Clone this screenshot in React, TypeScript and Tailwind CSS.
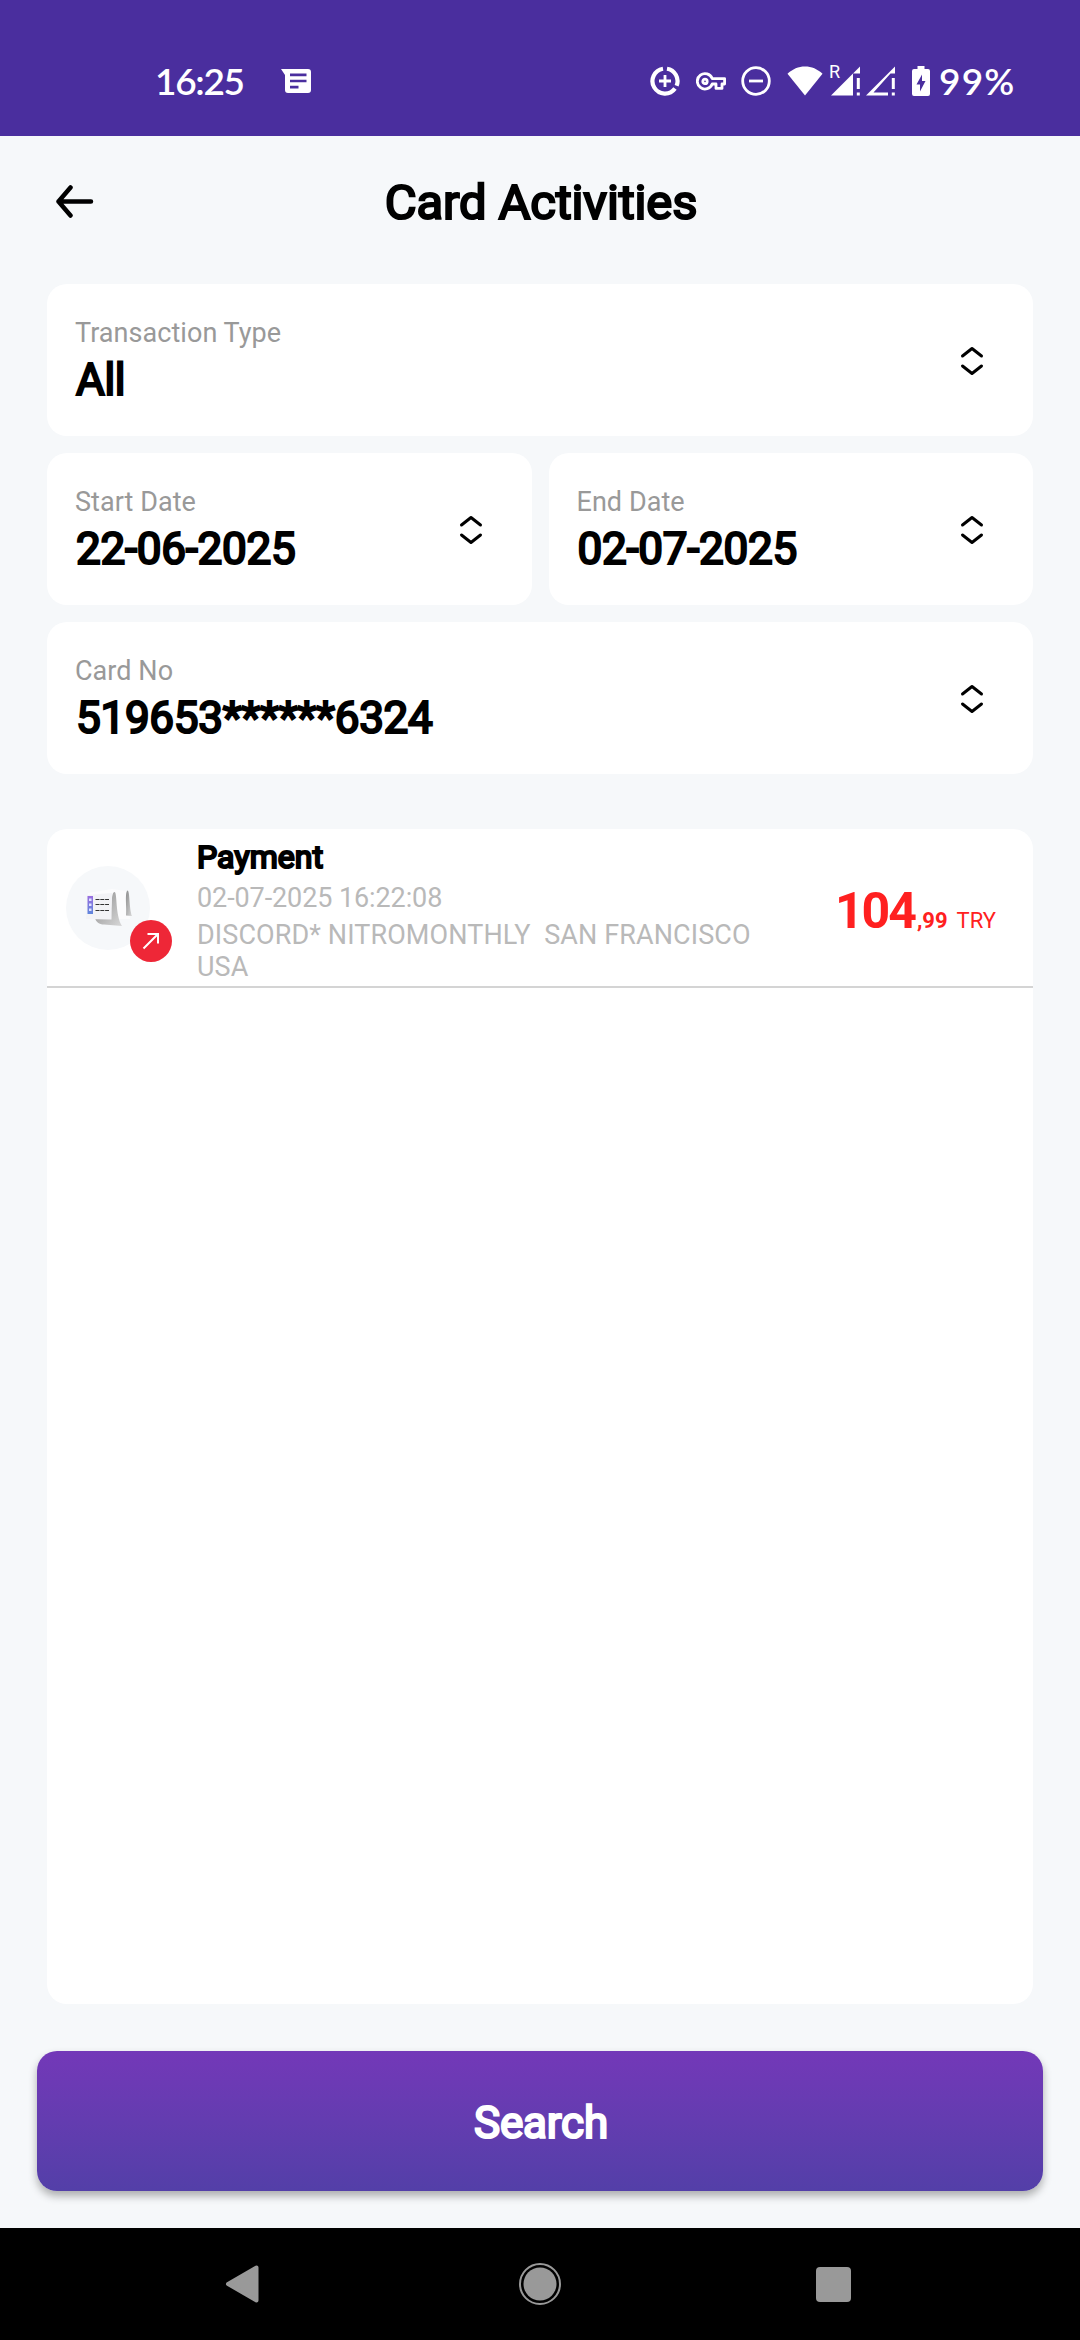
import type { ReactNode } from "react";
import { clsx } from "clsx";

interface Transaction {
  title: string;
  date: string;
  description: string;
  whole: string;
  fraction: string;
  currency: string;
}

const transactions: Transaction[] = [
  {
    title: "Payment",
    date: "02-07-2025 16:22:08",
    description: "DISCORD* NITROMONTHLY\u00a0 SAN FRANCISCO USA",
    whole: "104",
    fraction: ",99",
    currency: "TRY",
  },
];

function MessageIcon() {
  return (
    <svg width="30" height="24" viewBox="0 0 30 24" fill="#fff">
      <path
        fillRule="evenodd"
        d="M0 0h27a3 3 0 0 1 3 3v18a3 3 0 0 1-3 3H7a3 3 0 0 1-3-3V6zM9 4.6v2.6h16.5V4.6zM9 10.7v2.6h16.5v-2.6zM9 16.8v2.6h8.5v-2.6z"
      />
    </svg>
  );
}

function DataSaverIcon() {
  return (
    <svg width="30" height="30" viewBox="0 0 30 30" fill="none" stroke="#fff">
      <path d="M17 2.7A12.5 12.5 0 0 1 26.6 19.8M25 22.5A12.5 12.5 0 1 1 13 2.7" strokeWidth="4.2" />
      <path d="M15 9v12M9 15h12" strokeWidth="2.8" />
    </svg>
  );
}

function KeyIcon() {
  return (
    <svg width="30" height="19" viewBox="0 0 30 19" fill="none" stroke="#fff" strokeWidth="2.8">
      <path strokeLinejoin="round" d="M16.2 6.6H28.6V12H26V16.4H20V12H16.2A7.7 7.7 0 1 1 16.2 6.6Z" />
      <circle cx="9" cy="9.4" r="2.2" />
    </svg>
  );
}

function DoNotDisturbIcon() {
  return (
    <svg width="30" height="30" viewBox="0 0 30 30" fill="none" stroke="#fff" strokeWidth="2.8">
      <circle cx="15" cy="15" r="13.3" />
      <path d="M8 15h14" />
    </svg>
  );
}

function WifiIcon() {
  return (
    <svg width="36" height="30" viewBox="0 0 36 30" fill="#fff">
      <path d="M18 29.5.5 7.8C5.5 3 11.5.5 18 .5S30.5 3 35.5 7.8z" />
    </svg>
  );
}

function SignalIcon({ filled }: { filled?: boolean }) {
  return (
    <svg width="30" height="30" viewBox="0 0 30 30" fill="#fff">
      {filled ? (
        <path d="M0 29.5 29 .5V7.5H22V29.5z" />
      ) : (
        <path fillRule="evenodd" d="M0 29.5 29 .5V7.5H24.5L7.5 26.5H22V29.5z" />
      )}
      <path d="M25.8 12h3v11h-3zM25.8 26.5h3v3h-3z" />
    </svg>
  );
}

function BatteryIcon() {
  return (
    <svg width="18" height="30" viewBox="0 0 18 30" fill="#fff">
      <path
        fillRule="evenodd"
        d="M5.5 0h7v3H16a2 2 0 0 1 2 2V28a2 2 0 0 1-2 2H2a2 2 0 0 1-2-2V5a2 2 0 0 1 2-2h3.5zM10 8.5 4.5 18.5H8V25.5L13.5 15H10z"
      />
    </svg>
  );
}

function StatusBar() {
  return (
    <header className="flex h-[136px] items-center bg-[#4a2e9e] pt-[26px] pr-[65px] pl-[155px] font-['Lato',sans-serif] text-[37px] leading-none font-semibold text-white">
      <span className="w-[126px] pb-[2px] tracking-[-1.3px]">16:25</span>
      <MessageIcon />
      <div className="ml-auto flex items-center">
        <DataSaverIcon />
        <span className="ml-4">
          <KeyIcon />
        </span>
        <span className="ml-[15px]">
          <DoNotDisturbIcon />
        </span>
        <span className="ml-4">
          <WifiIcon />
        </span>
        <span className="relative ml-2">
          <span className="absolute -top-[3px] -left-[2px] font-['Roboto',sans-serif] text-[18px] leading-none font-normal">
            R
          </span>
          <SignalIcon filled />
        </span>
        <span className="ml-[5px]">
          <SignalIcon />
        </span>
        <span className="ml-4">
          <BatteryIcon />
        </span>
        <span className="ml-[9px] w-[76px] pb-[2px] tracking-[1.2px] whitespace-nowrap">99%</span>
      </div>
    </header>
  );
}

function UpDownIcon() {
  return (
    <svg
      className="mt-[2px]"
      width="24"
      height="30"
      viewBox="0 0 24 30"
      fill="none"
      stroke="#000"
      strokeWidth="3"
      strokeLinecap="round"
      strokeLinejoin="round"
    >
      <path d="M2.5 10 12 2.5 21.5 10M2.5 20 12 27.5 21.5 20" />
    </svg>
  );
}

function BoldText({ className, children }: { className?: string; children: ReactNode }) {
  return <div className={clsx("[-webkit-text-stroke:2.2px_currentColor]", className)}>{children}</div>;
}

function SelectField({ label, value }: { label: string; value: string }) {
  return (
    <button className="flex h-[152px] flex-1 items-center justify-between rounded-[20px] bg-white pr-[49px] pl-[28px] text-left">
      <div>
        <div className="pt-px text-[27px] leading-8 tracking-[0.05px] text-[#999]">{label}</div>
        <BoldText className="mt-[6px] ml-px text-[44px] leading-[50px] tracking-[-0.28px]">{value}</BoldText>
      </div>
      <UpDownIcon />
    </button>
  );
}

function ReceiptIcon() {
  return (
    <div className="relative h-[84px] w-[84px] shrink-0 rounded-full bg-[#f6f8fa]">
      <svg className="absolute top-[22px] left-[18px]" width="52" height="42" viewBox="0 0 52 42">
        <defs>
          <linearGradient id="curl" x1="0" y1="0" x2="1" y2="1">
            <stop offset="0" stopColor="#8d8d8d" />
            <stop offset="1" stopColor="#d8d8d8" />
          </linearGradient>
          <linearGradient id="strip" x1="0" y1="0" x2="0" y2="1">
            <stop offset="0" stopColor="#9a6fe0" />
            <stop offset="1" stopColor="#5f86dc" />
          </linearGradient>
        </defs>
        <path d="M4 5 28 1 42 3 46 31H2z" fill="#fcfcfd" />
        <path d="M11 30 26 29C28 20 27 4 30.500 4C33.500 4 31 27 38 38L20 36.500C15 36.500 12 34 11 30z" fill="url(#curl)" />
        <path d="M3 7 28 5 27.500 31.500 2 31z" fill="#f3f3f6" />
        <path d="M43.500 2.500C46 2.500 45 20 48 28L42 27.500C43 20 40.500 5 43.500 2.500z" fill="url(#curl)" />
        <path d="M3.500 8h5.500v18H3.500z" fill="url(#strip)" />
        <path d="M5 10.500h2.500v2.500H5zM5 15.500h2.500v2.500H5zM5 20.500h2.500v2.500H5z" fill="#dfe2ff" />
        <path
          d="M11.500 11.500H25M11.500 16.500H25M11.500 22.500H25"
          stroke="#333"
          strokeWidth="1.2"
          strokeDasharray="4 .8"
        />
      </svg>
      <span className="absolute top-[54px] left-[64px] flex h-[42px] w-[42px] items-center justify-center rounded-full bg-[#ee2737]">
        <svg width="18" height="18" viewBox="0 0 18 18" fill="none" stroke="#fff" strokeWidth="2">
          <path d="M1.500 16.500 16 2M5.500 2H16V11.500" />
        </svg>
      </span>
    </div>
  );
}

function TransactionRow({ tx }: { tx: Transaction }) {
  return (
    <div className="flex h-[159px] items-center border-b-2 border-[#d4d4d4] pr-[37px] pl-[19px]">
      <ReceiptIcon />
      <div className="ml-[47px] w-[570px] pt-[7px] text-[27px] leading-8 text-[#b9b9b9]">
        <BoldText className="text-[32px] leading-9 tracking-[0.1px] text-black [-webkit-text-stroke-width:1.5px]">
          {tx.title}
        </BoldText>
        <div className="mt-[7px] tracking-[-0.1px]">{tx.date}</div>
        <div className="mt-[5px] tracking-[0.1px]">{tx.description}</div>
      </div>
      <div className="ml-auto flex items-baseline pt-[7px] text-[22px] text-[#ff2020]">
        <span className="text-[50px] leading-none font-bold tracking-[-2px]">{tx.whole}</span>
        <span className="ml-[2px] font-bold">{tx.fraction}</span>
        <span className="ml-[9px]">{tx.currency}</span>
      </div>
    </div>
  );
}

function NavBar() {
  return (
    <nav className="flex h-28 items-center justify-between bg-black pr-[229px] pl-[225px]">
      <svg width="34" height="38" viewBox="0 0 34 38" fill="#999" stroke="#999" strokeWidth="4" strokeLinejoin="round">
        <path d="M3 19 31.500 2.500V35.500z" />
      </svg>
      <svg className="ml-1" width="42" height="42" viewBox="0 0 42 42" fill="#999">
        <circle cx="21" cy="21" r="20" fill="none" stroke="#999" strokeWidth="2" />
        <circle cx="21" cy="21" r="16.500" />
      </svg>
      <span className="h-[35px] w-[35px] rounded-[4px] bg-[#999]" />
    </nav>
  );
}

export default function App() {
  return (
    <div className="flex h-[2340px] w-[1080px] flex-col bg-[#f6f8fa] font-['Roboto',sans-serif] text-black">
      <StatusBar />

      <div className="grid h-[132px] grid-cols-[1fr_auto_1fr] items-center pr-[53px] pl-[55px]">
        <button aria-label="Back">
          <svg
            width="40"
            height="34"
            viewBox="0 0 40 34"
            fill="none"
            stroke="#000"
            strokeWidth="4.5"
            strokeLinecap="round"
            strokeLinejoin="round"
          >
            <path d="M36 16.5H3.5M15.5 2.5 3.5 16.5 15.5 30.5" />
          </svg>
        </button>
        <h1>
          <BoldText className="text-[49px] leading-none tracking-[-0.15px]">Card Activities</BoldText>
        </h1>
      </div>

      <main className="mt-4 flex flex-1 flex-col px-[47px]">
        <div className="flex flex-col gap-[17px]">
          <div className="flex">
            <SelectField label="Transaction Type" value="All" />
          </div>
          <div className="flex gap-[17px]">
            <SelectField label="Start Date" value="22-06-2025" />
            <SelectField label="End Date" value="02-07-2025" />
          </div>
          <div className="flex">
            <SelectField label="Card No" value="519653******6324" />
          </div>
        </div>

        <section className="mt-[55px] mb-[47px] flex-1 rounded-[20px] bg-white">
          {transactions.map((tx) => (
            <TransactionRow key={tx.date} tx={tx} />
          ))}
        </section>
      </main>

      <div className="px-[37px] pb-[37px]">
        <button className="h-[140px] w-full rounded-[20px] bg-linear-to-b from-[#7338b8] to-[#533fa8] pt-[3px] pl-[2px] text-[44px] tracking-[-0.2px] text-white shadow-[0_5px_8px_rgba(0,0,0,0.3)]">
          <BoldText>Search</BoldText>
        </button>
      </div>

      <NavBar />
    </div>
  );
}
